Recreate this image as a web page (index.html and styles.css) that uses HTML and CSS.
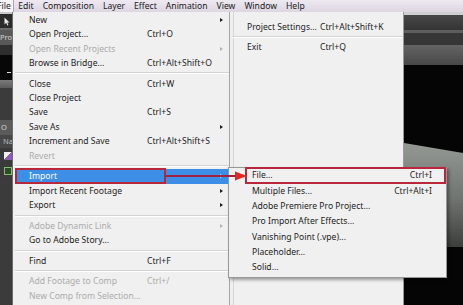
FILE: index.html
```html
<!DOCTYPE html>
<html lang="en">
<head>
    <meta charset="UTF-8">
    <title>File menu - Import</title>
    <link rel="stylesheet" href="styles.css">
</head>
<body>

<div class="menubar">
    <span class="mb-item mb-file">File</span>
    <span class="mb-item">Edit</span>
    <span class="mb-item">Composition</span>
    <span class="mb-item">Layer</span>
    <span class="mb-item">Effect</span>
    <span class="mb-item">Animation</span>
    <span class="mb-item">View</span>
    <span class="mb-item">Window</span>
    <span class="mb-item">Help</span>
</div>

<div class="workspace">
    <div class="side-strip">
        <div class="strip-line"></div>
        <div class="strip-tools">
            <svg class="tool-arrow" viewBox="0 0 6 9"><path d="M0.5 0.5 L0.5 7.5 L2.2 5.8 L3.4 8.5 L4.4 8 L3.3 5.4 L5.5 5.4 Z" fill="#e8e8e8"/></svg>
        </div>
        <div class="strip-edge"></div>
        <div class="strip-tab">Proj</div>
        <div class="strip-dark"></div>
        <div class="strip-black"><span class="strip-dash"></span></div>
        <div class="strip-gray"></div>
        <div class="strip-panel"></div>
        <div class="strip-search">O</div>
        <div class="strip-head">Na</div>
        <div class="strip-item"><span class="item-icon icon-comp"></span></div>
        <div class="strip-item"><span class="item-icon icon-footage"></span></div>
        <div class="strip-rest"></div>
    </div>

    <div class="menu menu-main">
        <div class="row"><span>New</span><span></span><span class="arrow"></span></div>
        <div class="row"><span>Open Project...</span><span>Ctrl+O</span><span></span></div>
        <div class="row disabled"><span>Open Recent Projects</span><span></span><span class="arrow"></span></div>
        <div class="row"><span>Browse in Bridge...</span><span>Ctrl+Alt+Shift+O</span><span></span></div>
        <div class="sep"></div>
        <div class="row"><span>Close</span><span>Ctrl+W</span><span></span></div>
        <div class="row"><span>Close Project</span><span></span><span></span></div>
        <div class="row"><span>Save</span><span>Ctrl+S</span><span></span></div>
        <div class="row"><span>Save As</span><span></span><span class="arrow"></span></div>
        <div class="row"><span>Increment and Save</span><span>Ctrl+Alt+Shift+S</span><span></span></div>
        <div class="row disabled"><span>Revert</span><span></span><span></span></div>
        <div class="sep"></div>
        <div class="row active"><span>Import</span><span></span><span class="arrow"></span></div>
        <div class="row"><span>Import Recent Footage</span><span></span><span class="arrow"></span></div>
        <div class="row"><span>Export</span><span></span><span class="arrow"></span></div>
        <div class="sep"></div>
        <div class="row disabled"><span>Adobe Dynamic Link</span><span></span><span class="arrow"></span></div>
        <div class="row"><span>Go to Adobe Story...</span><span></span><span></span></div>
        <div class="sep"></div>
        <div class="row"><span>Find</span><span>Ctrl+F</span><span></span></div>
        <div class="sep"></div>
        <div class="row disabled"><span>Add Footage to Comp</span><span>Ctrl+/</span><span></span></div>
        <div class="row disabled"><span>New Comp from Selection...</span><span></span><span></span></div>
    </div>

    <div class="menu menu-second">
        <div class="row"><span>Project Settings...</span><span>Ctrl+Alt+Shift+K</span></div>
        <div class="sep"></div>
        <div class="row"><span>Exit</span><span>Ctrl+Q</span></div>
    </div>

    <div class="app-view">
        <div class="view-top"></div>
        <div class="view-tabs"></div>
        <div class="view-line"></div>
        <div class="view-bar"></div>
        <div class="view-toolbar"></div>
        <div class="view-comp">
            <div class="footage"></div>
        </div>
    </div>

    <div class="submenu">
        <div class="sub-row"><span>File...</span><span>Ctrl+I</span></div>
        <div class="sub-row"><span>Multiple Files...</span><span>Ctrl+Alt+I</span></div>
        <div class="sub-row"><span>Adobe Premiere Pro Project...</span><span></span></div>
        <div class="sub-row"><span>Pro Import After Effects...</span><span></span></div>
        <div class="sub-row"><span>Vanishing Point (.vpe)...</span><span></span></div>
        <div class="sub-row"><span>Placeholder...</span><span></span></div>
        <div class="sub-row"><span>Solid...</span><span></span></div>
    </div>

    <div class="mark mark-import"></div>
    <div class="mark mark-file"></div>
    <svg class="mark-arrow" viewBox="0 0 82 10">
        <line x1="0" y1="5" x2="72" y2="5" stroke="#a1213f" stroke-width="2"/>
        <polygon points="70,0.5 82,5 70,9.5" fill="#e3261f"/>
    </svg>
</div>

</body>
</html>
```

FILE: styles.css
```css
body {
    margin: 0;
    width: 463px;
    height: 305px;
    overflow: hidden;
    font-family: "Noto Sans", "Open Sans", sans-serif;
    font-size: 8.6px;
    background-color: #3a3a3a;
}
.menubar {
    height: 12px;
    display: flex;
    align-items: center;
    background: linear-gradient(#eee9f1, #ddd6e2);
    color: #1a1a1a;
    font-size: 8.6px;
    overflow: hidden;
}
.mb-item {
    padding: 0 4.5px;
    line-height: 12px;
}
.mb-file {
    margin-left: -7px;
    padding: 0 2px 0 4px;
    background-color: #f5f3f7;
    border-right: 1px solid #aaa4b2;
}
.workspace {
    position: relative;
    display: flex;
    height: 293px;
}

/* left panel strip */
.side-strip {
    width: 12px;
    flex-shrink: 0;
    display: flex;
    flex-direction: column;
    background-color: #3a3a3a;
    border-right: 1px solid #6c6c6c;
    overflow: hidden;
    color: #d4d4d4;
    font-size: 7.5px;
}
.strip-line { height: 2px; background-color: #c9c9c9; }
.strip-tools { height: 14px; background-color: #2a2a2a; display: flex; align-items: center; padding-left: 4px; }
.tool-arrow { width: 6px; height: 9px; }
.strip-edge { height: 2px; background-color: #6a6a6a; }
.strip-tab { height: 15px; background-color: #585858; line-height: 15px; }
.strip-dark { height: 10px; background-color: #2e2e2e; }
.strip-black { height: 25px; background-color: #070707; display: flex; align-items: flex-end; justify-content: flex-end; padding-bottom: 7px; box-sizing: border-box; }
.strip-dash { width: 4px; height: 1px; background-color: #e0e0e0; margin-right: 1px; }
.strip-gray { height: 8px; background: linear-gradient(#7a7a7a, #5c5c5c); }
.strip-panel { height: 32px; background-color: #3b3b3b; }
.strip-search { height: 15px; background-color: #5b5b5b; line-height: 15px; padding-left: 1px; }
.strip-head { height: 13px; background-color: #474747; line-height: 13px; padding-left: 3px; color: #bdbdbd; }
.strip-item { height: 15px; display: flex; align-items: center; padding-left: 4px; }
.item-icon { width: 8px; height: 8px; }
.icon-comp { background: linear-gradient(135deg, #f0f0f0 45%, #8a5cb8 45%); }
.icon-footage { border: 1px solid #7fbf6a; background-color: #2d4a2a; width: 6px; height: 6px; }
.strip-rest { flex: 1; background-color: #3b3b3b; }

/* menus */
.menu {
    background-color: #f0f0f0;
    color: #1c1c1c;
    flex-shrink: 0;
}
.menu-main {
    width: 216px;
    padding-top: 0.8px;
    border-right: 1px solid #a6a6a6;
}
.menu-second {
    width: 173px;
    padding-top: 7.8px;
    border-right: 1px solid #9a9a9a;
    box-shadow: inset 3px 0 0 #f0f0f0, inset 4px 0 0 #d6d6d6;
}
.row {
    display: grid;
    grid-template-columns: 118px 1fr 8px;
    height: 14.4px;
    line-height: 14.4px;
    padding: 0 4px 0 16px;
    white-space: nowrap;
}
.menu-second .row {
    grid-template-columns: 73px 1fr;
    padding-left: 17px;
}
.row.disabled {
    color: #ababab;
}
.row.active {
    margin: 0 1px 0 2px;
    padding: 0 3px 0 14px;
    background-color: #3d8ee6;
    color: #fff;
}
.arrow {
    display: flex;
    align-items: center;
    justify-content: center;
}
.arrow::after {
    content: "";
    border-left: 3px solid #1c1c1c;
    border-top: 2.5px solid transparent;
    border-bottom: 2.5px solid transparent;
}
.disabled .arrow::after { border-left-color: #b2b2b2; }
.active .arrow::after { border-left-color: #fff; }
.sep {
    height: 0;
    margin: 2.125px 0 2.125px 2px;
    border-top: 1px solid #d3d3d3;
    border-bottom: 1px solid #fff;
}

/* viewer on the right */
.app-view {
    flex: 1;
    display: flex;
    flex-direction: column;
    background-color: #050505;
    overflow: hidden;
}
.view-top { height: 3px; background-color: #cfcfcf; }
.view-tabs { height: 15px; background: linear-gradient(#474747, #353535); }
.view-line { height: 3px; background-color: #5e5e5e; }
.view-bar { height: 12px; background-color: #363636; }
.view-toolbar { height: 20px; background: linear-gradient(#646464, #474747); }
.view-comp { flex: 1; background-color: #050505; }
.footage {
    margin-top: 76px;
    height: 106px;
    background: linear-gradient(#959a95, #707470 55%, #3c3e3c);
    clip-path: polygon(0 2px, 100% 12px, 100% 100%, 0 100%);
}

/* import submenu */
.submenu {
    position: absolute;
    left: 228px;
    top: 155px;
    width: 217px;
    padding: 0.3px 0 1.5px;
    background-color: #f0f0f0;
    color: #1c1c1c;
    border: 1px solid #979797;
    box-shadow: 2px 2px 3px rgba(0, 0, 0, 0.35);
}
.sub-row {
    display: flex;
    justify-content: space-between;
    height: 15.33px;
    line-height: 15.33px;
    padding: 0 14px 0 23px;
    white-space: nowrap;
}

/* red annotation */
.mark {
    position: absolute;
    box-sizing: border-box;
    border: 2px solid #b8283a;
}
.mark-import {
    left: 15px;
    top: 156px;
    width: 151px;
    height: 16px;
}
.mark-file {
    left: 245px;
    top: 155px;
    width: 201px;
    height: 17px;
}
.mark-arrow {
    position: absolute;
    left: 165px;
    top: 159px;
    width: 82px;
    height: 10px;
}
```
